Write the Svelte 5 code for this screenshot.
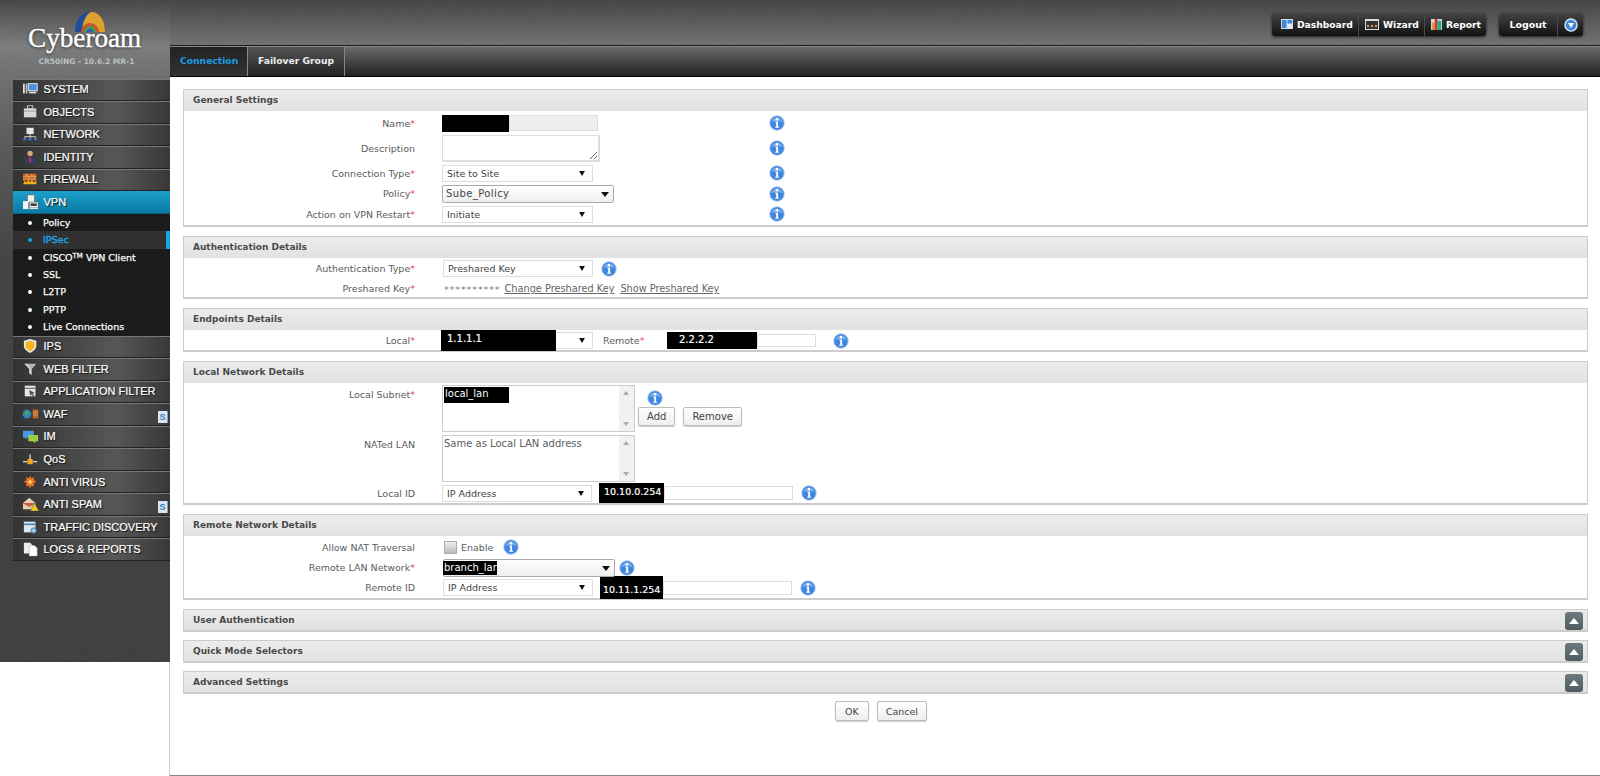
<script>
	const nav = [
		{ name: 'SYSTEM', icon: 'system' },
		{ name: 'OBJECTS', icon: 'objects' },
		{ name: 'NETWORK', icon: 'network' },
		{ name: 'IDENTITY', icon: 'identity' },
		{ name: 'FIREWALL', icon: 'firewall' },
		{ name: 'VPN', icon: 'vpn', active: true },
		{ name: 'IPS', icon: 'ips' },
		{ name: 'WEB FILTER', icon: 'filter' },
		{ name: 'APPLICATION FILTER', icon: 'app' },
		{ name: 'WAF', icon: 'waf', badge: true },
		{ name: 'IM', icon: 'im' },
		{ name: 'QoS', icon: 'qos' },
		{ name: 'ANTI VIRUS', icon: 'virus' },
		{ name: 'ANTI SPAM', icon: 'spam', badge: true },
		{ name: 'TRAFFIC DISCOVERY', icon: 'traffic' },
		{ name: 'LOGS & REPORTS', icon: 'logs' }
	];
	const vpnItems = ['Policy', 'IPSec', 'CISCO', 'SSL', 'L2TP', 'PPTP', 'Live Connections'];
	const collapsed = ['User Authentication', 'Quick Mode Selectors', 'Advanced Settings'];
</script>

{#snippet info()}
	<svg class="info" width="16" height="16" viewBox="0 0 16 16">
		<circle cx="8" cy="8" r="7.3" fill="#3f86e0" stroke="#b4cfef" stroke-width="0.9" />
		<path d="M2.5 7a5.600 5.600 0 0 1 11 0c-3-1.500-8-1.500-11 0z" fill="#79aeec" />
		<circle cx="8" cy="4.300" r="1.300" fill="#fff" />
		<path d="M6.200 6.600h2.900v5.200h1v1H6.200v-1h1v-4.200h-1z" fill="#fff" />
	</svg>
{/snippet}

{#snippet sel(value, width, big = false)}
	<span class="sel" class:big style:width="{width}px">{value}</span>
{/snippet}

{#snippet listbox(value, redacted = false)}
	<div class="listbox">
		<div class="list-body"><span class:picked={redacted}>{value}</span></div>
		<div class="list-scroll"><i class="up"></i><i class="down"></i></div>
	</div>
{/snippet}

{#snippet icon(name)}
	<svg class="nav-icon" width="18" height="16" viewBox="0 0 20 18">
		{#if name === 'system'}
			<rect x="1" y="3" width="2" height="11" fill="#ddd" /><rect x="4" y="3" width="2" height="11" fill="#bbb" />
			<rect x="7" y="3" width="10" height="8" fill="#4a8fe0" stroke="#eee" /><rect x="8" y="12" width="8" height="2" fill="#ddd" />
		{:else if name === 'objects'}
			<rect x="2" y="5" width="14" height="10" fill="#d8d8d8" /><rect x="6" y="2" width="6" height="3" fill="none" stroke="#ccc" />
			<path d="M2 8h14" stroke="#999" />
		{:else if name === 'network'}
			<rect x="5" y="2" width="8" height="7" fill="#e6e6e6" /><path d="M9 9v3M3 14v-2h12v2M9 12v2" stroke="#ddd" fill="none" />
			<path d="M1 15h4M7 15h4M13 15h4" stroke="#3a6fd0" stroke-width="2" />
		{:else if name === 'identity'}
			<circle cx="9" cy="5" r="3" fill="#d9a77e" /><path d="M3 16c0-5 3-7 6-7s6 2 6 7z" fill="#2d3f73" />
			<path d="M8.200 9h1.600l.5 6h-2.600z" fill="#c33" />
		{:else if name === 'firewall'}
			<rect x="1" y="3" width="15" height="8" fill="#c8641e" /><path d="M1 6h15M1 9h15M5 3v3M11 3v3M8 6v3M14 6v3" stroke="#f3c089" stroke-width="0.7" />
			<path d="M1 15l2-4 2 2 2-3 2 3 2-3 2 3 3-2v4z" fill="#f6b21c" />
		{:else if name === 'vpn'}
			<rect x="6" y="1" width="8" height="9" fill="#eee" stroke="#555" stroke-width="0.6" /><rect x="1" y="8" width="6" height="9" fill="#f4f4f4" />
			<rect x="8" y="9" width="10" height="6" fill="#eee" stroke="#555" stroke-width="0.6" /><rect x="9.500" y="10.500" width="7" height="3" fill="#444" />
			<rect x="8" y="15" width="10" height="2" fill="#ddd" />
		{:else if name === 'ips'}
			<path d="M9 1l7 2v6c0 4-4 6-7 8-3-2-7-4-7-8V3z" fill="#e9e9e9" /><path d="M9 3l5 1.500v4.500c0 3-3 4.500-5 6-2-1.500-5-3-5-6V4.500z" fill="#f2b71f" />
		{:else if name === 'filter'}
			<path d="M2 3h14l-5 6v7l-3-2V9z" fill="#b5b5b5" /><path d="M5 3l4 6v5" stroke="#eee" fill="none" />
		{:else if name === 'app'}
			<rect x="3" y="3" width="12" height="12" fill="#e6e6e6" /><path d="M3 6h12" stroke="#777" stroke-width="1.500" /><path d="M8 8l6 3-2 1 2 3-1 1-2-3-2 1z" fill="#555" />
		{:else if name === 'waf'}
			<circle cx="5.500" cy="9" r="5" fill="#2f7fb8" /><path d="M3 7l3-2 2 2-2 4-3-2z" fill="#4fae3a" />
			<rect x="12" y="4" width="6" height="10" fill="#c0622a" /><path d="M12 7h6M12 10h6" stroke="#eebb90" stroke-width="0.7" />
		{:else if name === 'im'}
			<path d="M1 3h12v8H6l-2 2v-2H1z" fill="#4a97e6" /><path d="M7 8h11v7h-3v2l-3-2H7z" fill="#9bd23c" />
		{:else if name === 'qos'}
			<path d="M9 4v5M1 12h5M12 12h5" stroke="#fff" stroke-width="1.200" /><rect x="6" y="9" width="6" height="6" rx="1" fill="#f3a71c" />
		{:else if name === 'virus'}
			<path d="M9 2l1.500 3 3-1.500-.5 3.500 3 1.500-3 2 .5 3.500-3-1-1.500 3-1.500-3-3 1 .5-3.500-3-2 3-1.500-.5-3.500 3 1.500z" fill="#f0761f" /><circle cx="9" cy="9" r="2" fill="#ffd08a" />
		{:else if name === 'spam'}
			<path d="M1 8l7-6 7 6v7H1z" fill="#e6cdb4" /><path d="M1 8l7 4 7-4" stroke="#a85" fill="#d7553a" />
			<path d="M14 8l5 9H9z" fill="#f4c61f" stroke="#333" stroke-width="0.500" />
		{:else if name === 'traffic'}
			<rect x="2" y="3" width="13" height="12" fill="#dfe7ee" /><path d="M2 6h13" stroke="#4a88c0" stroke-width="2" /><circle cx="13" cy="13" r="3" fill="#9cc9ee" stroke="#2f74b0" />
		{:else}
			<path d="M2 2h7l3 3v9H2z" fill="#eee" /><path d="M8 5h6l3 3v9H8z" fill="#fff" stroke="#999" stroke-width="0.500" />
		{/if}
	</svg>
{/snippet}

<div class="page">
	<aside class="sidebar">
		<svg class="grain" aria-hidden="true"><filter id="grain-a"><feTurbulence type="fractalNoise" baseFrequency="0.9" numOctaves="2" /><feColorMatrix type="saturate" values="0" /></filter><rect width="100%" height="100%" filter="url(#grain-a)" /></svg>
		<div class="logo">
			<svg class="logo-mark" width="30" height="20" viewBox="0 0 30 20">
				<path d="M0 20C0 8 7 0 15 0s15 8 15 20z" fill="#1e4f9c" />
				<path d="M7 20C7 8 13 0 17 0c7 0 13 8 13 20z" fill="#dca12c" />
				<path d="M6 20a9 9 0 0 1 18 0z" fill="#c8512f" />
				<path d="M9 20a6 6 0 0 1 12 0z" fill="#4e9d45" />
				<path d="M11.500 20a3.500 3.500 0 0 1 7 0z" fill="#2d5fb3" />
			</svg>
			<div class="logo-word">Cyberoam</div>
			<div class="logo-sub">CR50iNG - 10.6.2 MR-1</div>
		</div>
		<nav class="nav">
			{#each nav as item (item.name)}
				<div class="nav-item" class:active={item.active}>
					{@render icon(item.icon)}
					<span>{item.name}</span>
					{#if item.badge}<b class="badge">S</b>{/if}
				</div>
				{#if item.active}
					<div class="subnav">
						{#each vpnItems as sub (sub)}
							<div class="sub" class:current={sub === 'IPSec'}>
								{#if sub === 'CISCO'}CISCO<sup>TM</sup> VPN Client{:else}{sub}{/if}
							</div>
						{/each}
					</div>
				{/if}
			{/each}
		</nav>
	</aside>

	<div class="main">
		<header class="topbar">
			<svg class="grain" aria-hidden="true"><filter id="grain-b"><feTurbulence type="fractalNoise" baseFrequency="0.9" numOctaves="2" /><feColorMatrix type="saturate" values="0" /></filter><rect width="100%" height="100%" filter="url(#grain-b)" /></svg>
			<div class="btn-group">
				<button class="dash">
					<svg width="12" height="10" viewBox="0 0 13 11"><rect width="13" height="11" fill="#dbe8f6" /><rect x="1" y="1" width="5" height="9" fill="#3f86d8" /><rect x="7" y="1" width="5" height="4" fill="#3f86d8" /></svg>
					Dashboard
				</button>
				<button class="wiz">
					<svg width="14" height="11" viewBox="0 0 14 11"><rect width="14" height="11" fill="#ddd" /><rect x="1" y="2" width="12" height="8" fill="#333" /><path d="M2 7h2M6 7h2M10 7h2" stroke="#d95" stroke-width="2" /></svg>
					Wizard
				</button>
				<button class="rep">
					<svg width="11" height="12" viewBox="0 0 12 13"><rect y="1" width="12" height="12" fill="#cfd8e0" /><rect x="1" y="5" width="3" height="8" fill="#d93" /><rect x="4" y="1" width="3" height="12" fill="#c33" /><rect x="7" y="3" width="4" height="10" fill="#2a8" /></svg>
					Report
				</button>
			</div>
			<div class="btn-group logout">
				<button class="logout-btn">Logout</button>
				<button class="menu-btn" aria-label="Menu">
					<svg width="14" height="14" viewBox="0 0 14 14"><circle cx="7" cy="7" r="6" fill="#3f86d8" stroke="#cfe2f6" stroke-width="1.500" /><path d="M4 5h6l-3 5z" fill="#fff" /></svg>
				</button>
			</div>
		</header>
		<div class="tabs">
			<div class="tab current">Connection</div>
			<div class="tab">Failover Group</div>
		</div>

		<div class="content">
			<section class="box">
				<h2>General Settings</h2>
				<div class="body general">
					<div class="row r-name">
						<label>Name<em>*</em></label>
						<div class="ctl"><span class="black name-black"></span><input class="readonly" readonly /></div>
						{@render info()}
					</div>
					<div class="row r-desc">
						<label>Description</label>
						<div class="ctl"><textarea class="desc"></textarea></div>
						{@render info()}
					</div>
					<div class="row r-std">
						<label>Connection Type<em>*</em></label>
						<div class="ctl">{@render sel('Site to Site', 151)}</div>
						{@render info()}
					</div>
					<div class="row r-std">
						<label>Policy<em>*</em></label>
						<div class="ctl">{@render sel('Sube_Policy', 172, true)}</div>
						{@render info()}
					</div>
					<div class="row r-std">
						<label>Action on VPN Restart<em>*</em></label>
						<div class="ctl">{@render sel('Initiate', 151)}</div>
						{@render info()}
					</div>
				</div>
			</section>

			<section class="box">
				<h2>Authentication Details</h2>
				<div class="body">
					<div class="row r-auth">
						<label>Authentication Type<em>*</em></label>
						<div class="inline shifted">{@render sel('Preshared Key', 150)}{@render info()}</div>
					</div>
					<div class="row r-key">
						<label>Preshared Key<em>*</em></label>
						<div class="inline key">
							<span class="stars">**********</span>
							<a href="#change">Change Preshared Key</a>
							<a href="#show">Show Preshared Key</a>
						</div>
					</div>
				</div>
			</section>

			<section class="box">
				<h2>Endpoints Details</h2>
				<div class="body">
					<div class="row r-end">
						<label>Local<em>*</em></label>
						<div class="inline far-info">
							<span class="masked">{@render sel('', 151)}<span class="black over local-black">1.1.1.1</span></span>
							<span class="remote-label">Remote<em>*</em></span>
							<span class="field"><span class="black remote-black">2.2.2.2</span><input class="plain rest" /></span>
							{@render info()}
						</div>
					</div>
				</div>
			</section>

			<section class="box">
				<h2>Local Network Details</h2>
				<div class="body">
					<div class="row r-list">
						<label>Local Subnet<em>*</em></label>
						{@render listbox('local_lan', true)}
						<div class="list-actions">
							{@render info()}
							<div class="btns"><button class="btn">Add</button><button class="btn">Remove</button></div>
						</div>
					</div>
					<div class="row r-list second">
						<label>NATed LAN</label>
						{@render listbox('Same as Local LAN address')}
					</div>
					<div class="row r-id">
						<label>Local ID</label>
						<div class="inline">
							{@render sel('IP Address', 150)}
							<span class="field id"><span class="black id-black">10.10.0.254</span><input class="plain id-rest" /></span>
							{@render info()}
						</div>
					</div>
				</div>
			</section>

			<section class="box">
				<h2>Remote Network Details</h2>
				<div class="body">
					<div class="row r-nat">
						<label>Allow NAT Traversal</label>
						<div class="inline nat">
							<span class="check"></span><span class="enable">Enable</span>{@render info()}
						</div>
					</div>
					<div class="row r-lan">
						<label>Remote LAN Network<em>*</em></label>
						<div class="inline shifted near-info">
							<span class="masked">{@render sel('', 172, true)}<span class="black over lan-black">branch_lar</span></span>
							{@render info()}
						</div>
					</div>
					<div class="row r-rid">
						<label>Remote ID</label>
						<div class="inline shifted">
							{@render sel('IP Address', 150)}
							<span class="field id"><span class="black id-black tall">10.11.1.254</span><input class="plain id-rest" /></span>
							{@render info()}
						</div>
					</div>
				</div>
			</section>

			{#each collapsed as title (title)}
				<section class="box closed">
					<h2>{title}<span class="toggle"></span></h2>
				</section>
			{/each}

			<div class="actions"><button class="btn ok">OK</button><button class="btn">Cancel</button></div>
		</div>
	</div>
</div>

<style>
	:global(body) {
		margin: 0;
		background: #fff;
	}

	.page {
		display: grid;
		grid-template-columns: 170px 1fr;
		height: 776px;
		overflow: hidden;
		font-family: 'DejaVu Sans', sans-serif;
		font-size: 9.5px;
		color: #5c5c5c;
	}

	.grain {
		position: absolute;
		inset: 0;
		width: 100%;
		height: 100%;
		opacity: 0.1;
		pointer-events: none;
	}

	/* sidebar */
	.sidebar {
		position: relative;
		height: 662px;
		box-sizing: border-box;
		padding-left: 13px;
		background: linear-gradient(180deg, #424242 0, #7a7a7a 46px, #6c6c6c 75px, #555 150px, #3e3e3e 260px, #3a3a3a 100%);
	}

	.logo {
		position: relative;
		height: 78.5px;
		margin-left: -13px;
		text-align: center;
		color: #fff;
	}

	.logo-mark {
		position: absolute;
		left: 75px;
		top: 12px;
	}

	.logo-word {
		position: absolute;
		left: 28px;
		top: 21px;
		font-family: 'Liberation Serif', serif;
		font-size: 27.2px;
		line-height: 34px;
		-webkit-text-stroke: 0.4px #fff;
		text-shadow: 0 1px 3px #222;
	}

	.logo-sub {
		position: absolute;
		left: 0;
		right: 0;
		top: 56px;
		padding-left: 3px;
		font-size: 7.5px;
		font-weight: bold;
		line-height: 12px;
		color: #b9c0c4;
	}

	.nav {
		position: relative;
	}

	.nav-item {
		position: relative;
		display: flex;
		align-items: center;
		box-sizing: border-box;
		height: 22.55px;
		padding: 0 0 1px 9px;
		gap: 3.5px;
		border-top: 1px solid #777;
		border-bottom: 1px solid #222;
		background: linear-gradient(90deg, #333 0, #575757 65%, #383838 100%);
		font-family: 'Liberation Sans', sans-serif;
		font-size: 11px;
		color: #fff;
		-webkit-text-stroke: 0.2px #fff;
		text-shadow: 1px 1px 1px #111;
		white-space: nowrap;
	}

	.nav-item.active {
		border-top: 0;
		border-bottom: 1px solid #0a5f80;
		background: linear-gradient(180deg, #1c9fca 0, #0a7ba3 100%);
	}

	.badge {
		position: absolute;
		right: 2px;
		top: 7px;
		width: 9px;
		height: 12px;
		background: #d7e6f2;
		border-right: 1px solid #999;
		font-size: 9px;
		line-height: 12px;
		text-align: center;
		color: #2e7fc2;
		-webkit-text-stroke: 0;
		text-shadow: none;
	}

	.subnav {
		background: #1b1b1b;
	}

	.sub {
		position: relative;
		box-sizing: border-box;
		height: 17.4px;
		padding-left: 30px;
		font-size: 9.5px;
		font-family: 'DejaVu Sans', sans-serif;
		line-height: 17px;
		color: #fff;
		-webkit-text-stroke: 0.25px currentColor;
		white-space: nowrap;
	}

	.sub::before {
		content: '';
		position: absolute;
		left: 15px;
		top: 7px;
		width: 4px;
		height: 4px;
		border-radius: 50%;
		background: #fff;
	}

	.sub sup {
		font-size: 7px;
		line-height: 0;
		vertical-align: 3px;
	}

	.sub.current {
		background: #303030;
		color: #1aa5e3;
		border-right: 4px solid #14a5e6;
		-webkit-text-stroke: 0.45px currentColor;
	}

	.sub.current::before {
		background: #1aa5e3;
	}

	/* header */
	.main {
		display: flex;
		flex-direction: column;
		min-width: 0;
		border-left: 1px solid #ccc;
		border-bottom: 1px solid #888;
		margin-left: -1px;
		height: 775px;
	}

	.topbar {
		position: relative;
		display: flex;
		justify-content: flex-end;
		align-items: flex-start;
		gap: 13px;
		box-sizing: border-box;
		height: 46px;
		padding: 13px 17px 0 0;
		border-bottom: 1px solid #1a1a1a;
		background: linear-gradient(180deg, #404040 0, #6e6e6e 100%);
	}

	.btn-group {
		position: relative;
		display: flex;
		height: 23px;
		border-radius: 3px;
		background: linear-gradient(180deg, #444 0, #111 100%);
		box-shadow: 0 1px 3px rgba(0, 0, 0, 0.7);
	}

	.btn-group button {
		display: flex;
		align-items: center;
		gap: 4px;
		padding: 0 5px 1px 7px;
		border: 0;
		border-right: 1px solid #4a4a4a;
		background: none;
		font: bold 9.2px 'DejaVu Sans', sans-serif;
		color: #fff;
	}

	.btn-group .dash {
		padding-left: 9px;
	}

	.btn-group .wiz {
		padding: 0 5px 1px 6px;
	}

	.btn-group .rep {
		padding: 0 5px 1px 6px;
	}

	.btn-group button:last-child {
		border-right: 0;
	}

	.btn-group .logout-btn {
		width: 59px;
		justify-content: center;
		padding: 0 0 1px;
		font-size: 9.5px;
	}

	.btn-group .menu-btn {
		width: 25px;
		padding: 0;
		justify-content: center;
	}

	.tabs {
		display: flex;
		box-sizing: border-box;
		height: 31px;
		border-top: 1px solid #8a8a8a;
		border-bottom: 1px solid #000;
		background: linear-gradient(180deg, #6a6a6a 0, #222 100%);
	}

	.tab {
		padding: 0 10px;
		font-size: 9.2px;
		line-height: 28px;
		border-right: 1px solid #888;
		font-weight: bold;
		color: #eee;
		background: linear-gradient(180deg, #555 0, #232323 100%);
	}

	.tab.current {
		width: 57px;
		color: #1a9fe0;
		background: linear-gradient(180deg, #222 0, #333 100%);
	}

	/* form */
	.content {
		display: flex;
		flex-direction: column;
		gap: 9px;
		padding: 12px 12px 0 13px;
	}

	.box {
		border: 1px solid #ccc;
		border-bottom-width: 2px;
		background: #fff;
	}

	.closed + .closed {
		margin-top: -1px;
	}

	h2 {
		position: relative;
		margin: 0;
		height: 21px;
		padding-left: 9px;
		background: linear-gradient(180deg, #ececec 0, #e2e2e2 100%);
		font-size: 9px;
		font-weight: bold;
		line-height: 21px;
		color: #4a4a4a;
	}

	.closed h2 {
		height: 20px;
		line-height: 20px;
	}

	.toggle {
		position: absolute;
		right: 4px;
		top: 2px;
		width: 18px;
		height: 18px;
		border-radius: 3px;
		background: linear-gradient(180deg, #6d7b80 0, #4f5c61 100%);
	}

	.toggle::after {
		content: '';
		position: absolute;
		left: 4px;
		top: 6px;
		border: 5px solid transparent;
		border-top: 0;
		border-bottom: 6px solid #fff;
	}

	.row {
		display: flex;
		align-items: center;
		box-sizing: border-box;
	}

	.row label {
		flex: none;
		width: 231px;
		margin-right: 27px;
		text-align: right;
		white-space: nowrap;
	}

	em {
		font-style: normal;
		color: #e8404a;
	}

	.ctl {
		display: flex;
		align-items: flex-start;
		width: 327px;
		flex: none;
	}

	.inline {
		display: flex;
		align-items: center;
	}

	.shifted {
		margin-left: 1px;
	}

	.info {
		flex: none;
	}

	.r-name {
		height: 22px;
		padding-top: 2px;
	}

	.r-desc {
		height: 30px;
	}

	.r-std {
		height: 20.55px;
	}

	.r-auth {
		height: 21px;
		padding-top: 1px;
	}

	.black {
		display: inline-block;
		background: #000;
		color: #fff;
	}

	.name-black {
		width: 67px;
		height: 17px;
	}

	input,
	textarea {
		box-sizing: border-box;
		font: 9.5px 'DejaVu Sans', sans-serif;
		color: #444;
	}

	input {
		border: 1px solid #ddd;
		outline: 0;
		padding: 0;
	}

	.readonly {
		width: 89px;
		height: 16px;
		background: #eee;
		border-color: #ddd;
	}

	.desc {
		display: block;
		width: 158px;
		height: 27px;
		padding: 2px;
		margin: 0;
		border: 1px solid #ddd;
		border-width: 1px 2px 2px 1px;
	}

	.sel {
		position: relative;
		display: inline-block;
		flex: none;
		box-sizing: border-box;
		height: 17px;
		padding-left: 4px;
		border: 1px solid #ddd;
		background: #fff;
		color: #444;
		line-height: 15px;
	}

	.sel::after {
		content: '';
		position: absolute;
		right: 7px;
		top: 5px;
		border: 3px solid transparent;
		border-bottom: 0;
		border-top: 5px solid #111;
	}

	.sel.big {
		height: 18px;
		padding-left: 3px;
		border: 1px solid #aaa;
		border-radius: 2px;
		background: linear-gradient(180deg, #fff 0, #eee 100%);
		font-size: 10px;
		line-height: 16px;
		letter-spacing: 0.4px;
	}

	.sel.big::after {
		top: 6px;
		right: 4px;
		border-width: 4px;
		border-bottom: 0;
		border-top-width: 5px;
	}

	.inline > :global(.info) {
		margin-left: 8px;
	}

	.far-info > :global(.info) {
		margin-left: 17px;
	}

	.near-info > :global(.info) {
		margin-left: 4px;
	}

	.nat > :global(.info) {
		margin-left: 10px;
	}

	.r-key {
		height: 18.4px;
		padding-top: 1px;
	}

	.key {
		color: #555;
	}

	.stars {
		margin: 2px 4px 0 2px;
		letter-spacing: 0.9px;
		color: #777;
	}

	.key a {
		margin-right: 6px;
		font-size: 9.75px;
		color: #666;
	}

	.r-end {
		height: 20px;
		padding-top: 1px;
	}

	.masked {
		position: relative;
		display: inline-flex;
		margin-left: 0;
	}

	.over {
		position: absolute;
		left: -1px;
		top: -2px;
		box-sizing: border-box;
		padding-left: 6px;
	}

	.local-black {
		width: 115px;
		height: 21px;
		line-height: 17px;
		top: -2px;
		font-size: 10px;
		-webkit-text-stroke: 0.2px #fff;
	}

	.remote-label {
		margin-left: 10px;
		width: 64px;
	}

	.field {
		display: inline-flex;
		align-items: center;
	}

	.remote-black {
		width: 90px;
		height: 17px;
		padding-left: 12px;
		box-sizing: border-box;
		font-size: 10px;
		line-height: 15px;
		-webkit-text-stroke: 0.2px #fff;
	}

	.rest {
		width: 59px;
		height: 13px;
	}

	.plain {
		background: #fff;
	}

	.r-list {
		align-items: flex-start;
		height: 50.5px;
		padding-top: 2px;
	}

	.r-list label {
		padding-top: 4px;
	}

	.r-list.second {
		height: 49px;
		padding-top: 1.5px;
	}

	.listbox {
		display: flex;
		width: 193px;
		height: 47px;
		box-sizing: border-box;
		border: 1px solid #ccc;
		flex: none;
	}

	.list-body {
		flex: 1;
		padding: 1px;
		font-size: 10px;
		line-height: 14px;
	}

	.picked {
		display: inline-block;
		width: 65px;
		height: 16px;
		padding-left: 1px;
		box-sizing: border-box;
		background: #000;
		color: #fff;
	}

	.list-scroll {
		position: relative;
		width: 15px;
		background: #f1f1f1;
	}

	.list-scroll i {
		position: absolute;
		left: 4px;
		border: 3px solid transparent;
	}

	.up {
		top: 5px;
		border-top: 0 !important;
		border-bottom: 4px solid #aaa !important;
	}

	.down {
		bottom: 5px;
		border-bottom: 0 !important;
		border-top: 4px solid #aaa !important;
	}

	.list-actions {
		margin-left: 3px;
		padding-top: 5px;
	}

	.list-actions :global(.info) {
		display: block;
		margin-left: 9px;
	}

	.btns {
		display: flex;
		gap: 8px;
		margin-top: 1px;
	}

	.btn {
		height: 19px;
		padding: 0 8px;
		border: 1px solid #bbb;
		border-radius: 2px;
		background: linear-gradient(180deg, #fff 0, #eee 100%);
		box-shadow: 0 1px 1px rgba(0, 0, 0, 0.2);
		font: 10px 'DejaVu Sans', sans-serif;
		color: #444;
	}

	.r-id {
		height: 20px;
		padding-top: 1px;
	}

	.id {
		margin-left: 7px;
	}

	.id-black {
		width: 65px;
		height: 20px;
		padding-left: 5px;
		box-sizing: border-box;
		line-height: 17px;
		-webkit-text-stroke: 0.2px #fff;
	}

	.id-black.tall {
		width: 63px;
		height: 23px;
		padding-left: 3px;
		line-height: 27px;
	}

	.id-rest {
		width: 129px;
		height: 14px;
	}

	.r-nat {
		height: 22px;
		padding-top: 1px;
	}

	.check {
		width: 11px;
		height: 11px;
		margin-left: 2px;
		border: 1px solid #aaa;
		background: linear-gradient(180deg, #eee 0, #bbb 100%);
	}

	.enable {
		margin-left: 4px;
	}

	.r-lan,
	.r-rid {
		height: 20px;
	}

	.lan-black {
		left: 0;
		top: 2px;
		width: 54px;
		height: 14px;
		padding-left: 1px;
		overflow: hidden;
		font-size: 10px;
		line-height: 14px;
	}

	.actions {
		display: flex;
		justify-content: center;
		gap: 8px;
		margin-top: -1.5px;
		padding-right: 9px;
	}

	.actions .btn {
		height: 20px;
		padding: 0 8px;
		font-size: 9.5px;
	}

	.actions .ok {
		padding: 0 9px;
	}
</style>
